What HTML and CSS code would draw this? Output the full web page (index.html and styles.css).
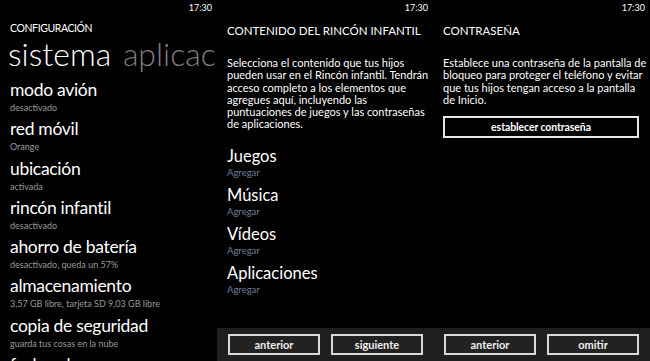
FILE: index.html
```html
<!DOCTYPE html>
<html lang="es">
<head>
    <meta charset="UTF-8">
    <meta name="viewport" content="width=device-width, initial-scale=1.0">
    <title>Rincón infantil</title>
    <link rel="stylesheet" href="styles.css">
</head>
<body>
    <div class="screens">
        <!-- configuracion -->
        <div class="screen first">
            <div class="status">17:30</div>
            <div class="page-title small">CONFIGURACIÓN</div>
            <div class="pivot">
                <span class="pivot-on">sistema</span>
                <span class="pivot-off">aplicaciones</span>
            </div>
            <ul class="settings">
                <li><span class="item-title">modo avión</span><span class="item-sub">desactivado</span></li>
                <li><span class="item-title">red móvil</span><span class="item-sub">Orange</span></li>
                <li><span class="item-title">ubicación</span><span class="item-sub">activada</span></li>
                <li><span class="item-title">rincón infantil</span><span class="item-sub">desactivado</span></li>
                <li><span class="item-title">ahorro de batería</span><span class="item-sub">desactivado, queda un 57%</span></li>
                <li><span class="item-title">almacenamiento</span><span class="item-sub">3,57 GB libre, tarjeta SD 9,03 GB libre</span></li>
                <li><span class="item-title">copia de seguridad</span><span class="item-sub">guarda tus cosas en la nube</span></li>
                <li><span class="item-title">fecha y hora</span><span class="item-sub">UTC+01</span></li>
            </ul>
        </div>

        <!-- contenido -->
        <div class="screen">
            <div class="status">17:30</div>
            <div class="main">
                <div class="page-title">CONTENIDO DEL RINCÓN INFANTIL</div>
                <p class="intro">Selecciona el contenido que tus hijos<br>pueden usar en el Rincón infantil. Tendrán<br>acceso completo a los elementos que<br>agregues aquí, incluyendo las<br>puntuaciones de juegos y las contraseñas<br>de aplicaciones.</p>
                <ul class="content-list">
                    <li><span class="content-title">Juegos</span><span class="content-add">Agregar</span></li>
                    <li><span class="content-title">Música</span><span class="content-add">Agregar</span></li>
                    <li><span class="content-title">Vídeos</span><span class="content-add">Agregar</span></li>
                    <li><span class="content-title">Aplicaciones</span><span class="content-add">Agregar</span></li>
                </ul>
            </div>
            <div class="app-bar">
                <button class="bar-btn">anterior</button>
                <button class="bar-btn">siguiente</button>
            </div>
        </div>

        <!-- contrasena -->
        <div class="screen last">
            <div class="status">17:30</div>
            <div class="main">
                <div class="page-title">CONTRASEÑA</div>
                <p class="intro">Establece una contraseña de la pantalla de<br>bloqueo para proteger el teléfono y evitar<br>que tus hijos tengan acceso a la pantalla<br>de Inicio.</p>
                <button class="wide-btn">establecer contraseña</button>
            </div>
            <div class="app-bar">
                <button class="bar-btn">anterior</button>
                <button class="bar-btn">omitir</button>
            </div>
        </div>
    </div>
</body>
</html>
```

FILE: styles.css
```css
* {
    margin: 0;
    padding: 0;
    box-sizing: border-box;
}
body {
    font-family: Lato, "Open Sans", sans-serif;
    background-color: #000;
    color: #fff;
    overflow: hidden;
}
.screens {
    display: flex;
    width: 650px;
    height: 361px;
}
.screen {
    width: 216px;
    height: 361px;
    overflow: hidden;
    display: flex;
    flex-direction: column;
}
.screen.first,
.screen.last {
    width: 217px;
}
.status {
    height: 18px;
    font-size: 9px;
    line-height: 15px;
    text-align: right;
    padding-right: 5px;
}
.page-title {
    font-size: 11.5px;
    font-weight: 400;
    line-height: 16px;
    margin-top: 5px;
    padding-left: 10px;
    white-space: nowrap;
}
.page-title.small {
    font-size: 10.5px;
    letter-spacing: -0.4px;
}
.pivot {
    white-space: nowrap;
    font-size: 32px;
    font-weight: 300;
    line-height: 36px;
    padding-left: 8px;
}
.pivot-off {
    color: #7f7f7f;
    margin-left: 3px;
}
.settings {
    list-style: none;
    padding-left: 10px;
    margin-top: 6px;
}
.settings li {
    display: flex;
    flex-direction: column;
    height: 39.3px;
    white-space: nowrap;
}
.item-title {
    font-size: 17.5px;
    line-height: 24px;
    letter-spacing: -0.3px;
}
.item-sub {
    font-size: 9px;
    line-height: 11px;
    color: #9a9a9a;
}
.main {
    flex: 1;
    padding-left: 10px;
    padding-right: 4px;
}
.main .page-title {
    padding-left: 0;
}
.intro {
    font-size: 11px;
    line-height: 12.3px;
    margin-top: 18px;
    white-space: nowrap;
}
.content-list {
    list-style: none;
    margin-top: 14px;
}
.content-list li {
    display: flex;
    flex-direction: column;
    height: 39px;
}
.content-title {
    font-size: 16.5px;
    line-height: 22px;
}
.content-add {
    font-size: 9.5px;
    line-height: 11px;
    color: #6f7f9c;
}
.wide-btn {
    display: block;
    width: 196px;
    height: 22px;
    margin-top: 10px;
    background: #000;
    color: #fff;
    border: 2px solid #e6e6e6;
    font-family: inherit;
    font-size: 10.5px;
    font-weight: 700;
    letter-spacing: -0.1px;
}
.app-bar {
    height: 33px;
    background: #1f1f1f;
    display: flex;
    gap: 11px;
    padding: 6px 0 0 11px;
}
.bar-btn {
    width: 92px;
    height: 21px;
    background: #222;
    color: #eee;
    border: 2px solid #d9d9d9;
    font-family: inherit;
    font-size: 11px;
    font-weight: 700;
}
```
